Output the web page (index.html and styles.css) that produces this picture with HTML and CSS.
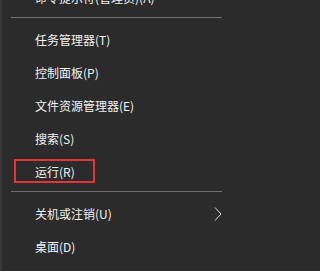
FILE: index.html
```html
<!DOCTYPE html>
<html lang="zh-CN">
<head>
<meta charset="utf-8">
<link rel="stylesheet" href="styles.css">
</head>
<body>
<div class="menu">
  <div class="item">命令提示符(管理员)(A)</div>
  <div class="sep"></div>
  <div class="item">任务管理器(T)</div>
  <div class="item">控制面板(P)</div>
  <div class="item">文件资源管理器(E)</div>
  <div class="item">搜索(S)</div>
  <div class="item marked">运行(R)<span class="highlight"></span></div>
  <div class="sep"></div>
  <div class="item sub"><span class="label">关机或注销(U)</span><svg class="chev" width="8" height="16" viewBox="0 0 8 16"><path d="M1 1.5 L7 8 L1 14.5" fill="none" stroke="#d8d8d8" stroke-width="1"/></svg></div>
  <div class="item">桌面(D)</div>
</div>
</body>
</html>
```
FILE: styles.css
```css
html, body {
  margin: 0;
  padding: 0;
  background: #2b2b2b;
  height: 100%;
  overflow: hidden;
}
.menu {
  width: 231px;
  height: 290px;
  margin-top: -19px;
  border-left: 2px solid #3a3a3a;
  background: #2b2b2b;
  font-family: "Noto Sans CJK SC", "Noto Sans", sans-serif;
  font-size: 12px;
  color: #f2f2f2;
  display: flex;
  flex-direction: column;
}
.item {
  position: relative;
  height: 33px;
  display: flex;
  align-items: center;
  padding-left: 33px;
  flex-shrink: 0;
}
.sub {
  padding-right: 11px;
}
.chev {
  margin-left: auto;
  display: block;
}
.sep {
  height: 9px;
  flex-shrink: 0;
  box-sizing: border-box;
  padding-top: 3px;
  margin: 0 11px 0 9px;
}
.sep::before {
  content: "";
  display: block;
  height: 1px;
  background: #6f6f6f;
}
.highlight {
  position: absolute;
  left: 12px;
  top: 4px;
  width: 81px;
  height: 24px;
  box-sizing: border-box;
  border: 2px solid #e0353a;
}
```
